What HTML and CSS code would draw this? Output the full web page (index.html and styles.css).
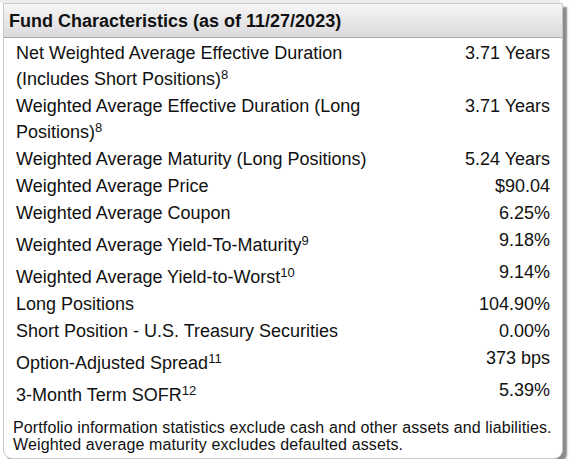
FILE: index.html
```html
<!DOCTYPE html>
<html>
<head>
<meta charset="utf-8">
<link rel="stylesheet" href="styles.css">
</head>
<body>
<div class="card">
  <div class="card-header">Fund Characteristics (as of 11/27/2023)</div>
  <table class="stats">
    <tr><td class="label">Net Weighted Average Effective Duration (Includes Short Positions)<sup>8</sup></td><td class="value">3.71 Years</td></tr>
    <tr><td class="label">Weighted Average Effective Duration (Long Positions)<sup>8</sup></td><td class="value">3.71 Years</td></tr>
    <tr><td class="label">Weighted Average Maturity (Long Positions)</td><td class="value">5.24 Years</td></tr>
    <tr><td class="label">Weighted Average Price</td><td class="value">$90.04</td></tr>
    <tr><td class="label">Weighted Average Coupon</td><td class="value">6.25%</td></tr>
    <tr><td class="label">Weighted Average Yield-To-Maturity<sup>9</sup></td><td class="value">9.18%</td></tr>
    <tr><td class="label">Weighted Average Yield-to-Worst<sup>10</sup></td><td class="value">9.14%</td></tr>
    <tr><td class="label">Long Positions</td><td class="value">104.90%</td></tr>
    <tr><td class="label">Short Position - U.S. Treasury Securities</td><td class="value">0.00%</td></tr>
    <tr><td class="label">Option-Adjusted Spread<sup>11</sup></td><td class="value">373 bps</td></tr>
    <tr><td class="label">3-Month Term SOFR<sup>12</sup></td><td class="value">5.39%</td></tr>
  </table>
  <p class="note">Portfolio information statistics exclude cash and other assets and liabilities. Weighted average maturity excludes defaulted assets.</p>
</div>
</body>
</html>
```

FILE: styles.css
```css
html, body {
  margin: 0;
  padding: 0;
  background: #ffffff;
}
body {
  font-family: "Liberation Sans", Arial, sans-serif;
  color: #111111;
  padding: 3px 0 0 3px;
  background: linear-gradient(#eeeeee, #eeeeee) no-repeat 0 0 / 560px 3px, #ffffff;
}
.card {
  width: 560px;
  height: 456px;
  box-sizing: border-box;
  border: 1px solid #c8c8c8;
  border-radius: 0 0 9px 9px;
  box-shadow: 4px 4px 2px #8a8a8a;
  background: #ffffff;
  overflow: hidden;
}
.card-header {
  height: 34px;
  box-sizing: border-box;
  padding: 7px 0 0 5px;
  font-weight: bold;
  font-size: 18px;
  line-height: 20px;
  background: linear-gradient(#f6f6f6, #dadadd);
  border-bottom: 1px solid #a9a9a9;
}
.stats {
  border-collapse: collapse;
  margin: 2px 0 0 8px;
  width: 542px;
  font-size: 18px;
  line-height: 21px;
}
.stats td {
  padding: 3px 4px;
  vertical-align: top;
}
.stats .label {
  width: 372px;
}
.stats .value {
  text-align: right;
  white-space: nowrap;
}
.stats sup {
  font-size: 13px;
  vertical-align: 6px;
}
.note {
  margin: 10px 2px 0 9px;
  font-size: 16px;
  line-height: 17px;
  letter-spacing: 0.12px;
}
```
